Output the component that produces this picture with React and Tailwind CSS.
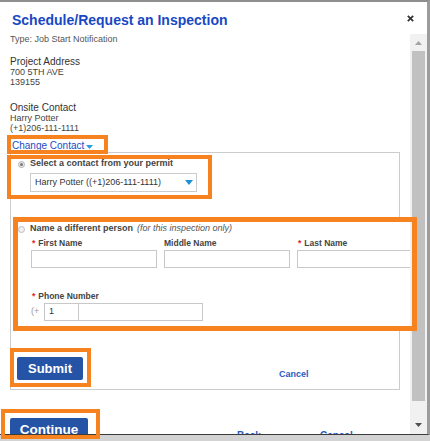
export default function App() {
  return (
    <div className="relative w-[430px] h-[441px] overflow-hidden bg-[#d3d3d3] font-['Liberation_Sans',Arial,sans-serif]">
      <div className="flex flex-col w-[430px] h-[435px] bg-white border-t-2 border-r-[3px] border-b border-t-[#8e8e8e] border-r-[#9c9c9c] border-b-[#3c3c3c]">
        {/* header */}
        <div className="flex h-[32px] shrink-0 items-start justify-between pl-[12px] pt-[10px]">
          <h1 className="text-[14px] leading-[16px] font-bold text-[#1848c4]">Schedule/Request an Inspection</h1>
          <svg className="mt-[3px] mr-[13px]" width="7" height="7" viewBox="0 0 7 7">
            <path d="M0.8 0.8 L6.2 6.2 M6.2 0.8 L0.8 6.2" stroke="#333" strokeWidth="1.7" />
          </svg>
        </div>
        {/* body */}
        <div className="flex h-[400px] shrink-0">
          <div className="w-[410px] shrink-0 overflow-hidden pl-[10px]">
            <p className="text-[9px] leading-[10px] text-[#555]">Type: Job Start Notification</p>
            <div className="mt-[13px] text-[9px] leading-[10px] text-[#444]">
              <p className="text-[10px] text-[#333]">Project Address</p>
              <p>700 5TH AVE</p>
              <p>139155</p>
            </div>
            <div className="mt-[16px] text-[9px] leading-[10px] text-[#444]">
              <p className="text-[10px] text-[#333]">Onsite Contact</p>
              <p>Harry Potter</p>
              <p>(+1)206-111-1111</p>
            </div>
            <div className="ml-[2px] mt-[8px] flex items-center text-[10px] leading-[10px] text-[#1a4cc4]">
              <span className="underline">Change Contact</span>
              <svg className="ml-[2px] mt-[2px]" width="7" height="4" viewBox="0 0 7 4">
                <path d="M0 0 L7 0 L3.5 4 Z" fill="#2b9be0" />
              </svg>
            </div>

            {/* panel */}
            <div className="mt-[1px] w-[390px] border border-[#cccccc] pb-[9px]">
              <div className="mt-[5px] flex h-[12px] items-center">
                <span className="ml-[7px] flex h-[7px] w-[7px] items-center justify-center rounded-full border border-[#b3b3b3] bg-[#ececec]">
                  <span className="h-[3px] w-[3px] rounded-full bg-[#777]" />
                </span>
                <span className="ml-[5px] text-[9px] font-bold text-[#444]">Select a contact from your permit</span>
              </div>
              <div className="ml-[19px] mt-[3px] flex h-[19px] w-[167px] items-center justify-between border border-[#cccccc] pl-[4px] pr-[3px]">
                <span className="text-[9px] text-[#333]">Harry Potter ((+1)206-111-1111)</span>
                <svg width="8" height="5" viewBox="0 0 8 5">
                  <path d="M0 0 L8 0 L4 5 Z" fill="#1e90d8" />
                </svg>
              </div>

              {/* different person */}
              <div className="mt-[30px] w-[399px] bg-white pt-[1px] pb-[5px]">
                <div className="flex h-[12px] items-center">
                  <span className="ml-[7px] h-[7px] w-[7px] rounded-full border border-[#bdbdbd] bg-[#f0f0f0]" />
                  <span className="ml-[5px] text-[9px] font-bold text-[#444]">Name a different person</span>
                  <span className="ml-[4px] text-[9px] italic text-[#555]">(for this inspection only)</span>
                </div>
                <div className="ml-[20px] mt-[2px] flex h-[12px] items-center gap-[7px] text-[8.5px] font-bold text-[#444]">
                  <div className="flex w-[126px] shrink-0 items-center">
                    <span className="ml-[1px] text-[#e02222]">*</span>
                    <span className="ml-[3px]">First Name</span>
                  </div>
                  <div className="w-[126px] shrink-0">Middle Name</div>
                  <div className="flex w-[126px] shrink-0 items-center">
                    <span className="ml-[1px] text-[#e02222]">*</span>
                    <span className="ml-[3px]">Last Name</span>
                  </div>
                </div>
                <div className="ml-[20px] mt-[1px] flex gap-[7px]">
                  <div className="h-[18px] w-[126px] shrink-0 border border-[#c8c8c8]" />
                  <div className="h-[18px] w-[126px] shrink-0 border border-[#c8c8c8]" />
                  <div className="h-[18px] w-[126px] shrink-0 border border-[#c8c8c8]" />
                </div>
                <div className="ml-[20px] mt-[22px] flex h-[12px] items-center text-[8.5px] font-bold text-[#444]">
                  <span className="ml-[1px] text-[#e02222]">*</span>
                  <span className="ml-[3px]">Phone Number</span>
                </div>
                <div className="ml-[20px] mt-[1px] flex h-[18px] items-center">
                  <span className="w-[13px] text-[9px] text-[#9a9a9a]">(+</span>
                  <div className="flex h-[18px] w-[35px] items-center border border-[#c8c8c8] pl-[4px] text-[9px] text-[#333]">1</div>
                  <div className="h-[18px] w-[124px] border border-l-0 border-[#c8c8c8]" />
                </div>
              </div>

              <div className="mt-[31px] flex items-end">
                <button className="ml-[6px] h-[23px] w-[66px] rounded-[2px] bg-[#2553a6] text-[13px] font-bold text-white">Submit</button>
                <span className="ml-[196px] text-[9px] font-bold leading-[12px] text-[#2a5bc2]">Cancel</span>
              </div>
            </div>

            <div className="mt-[28px] flex items-end">
              <button className="h-[23px] w-[78px] rounded-[2px] bg-[#2553a6] pt-[2px] text-[13.5px] font-bold text-white">Continue</button>
              <span className="ml-[149px] -mb-[1px] text-[10px] font-bold leading-[12px] text-[#2a5bc2]">Back</span>
              <span className="ml-[59px] -mb-[1px] text-[10px] font-bold leading-[12px] text-[#2a5bc2]">Cancel</span>
            </div>
          </div>

          {/* scrollbar */}
          <div className="flex w-[17px] shrink-0 flex-col items-center bg-[#f1f1f1]">
            <div className="flex h-[17px] w-full items-center justify-center">
              <svg width="7" height="4" viewBox="0 0 7 4">
                <path d="M0 4 L3.5 0 L7 4 Z" fill="#a3a3a3" />
              </svg>
            </div>
            <div className="h-[350px] w-[13px] bg-[#c1c1c1]" />
            <div className="flex-1" />
            <div className="flex h-[17px] w-full items-center justify-center pb-[1px]">
              <svg width="7" height="4" viewBox="0 0 7 4">
                <path d="M0 0 L7 0 L3.5 4 Z" fill="#505050" />
              </svg>
            </div>
          </div>
        </div>
      </div>

      {/* annotation boxes */}
      <div className="absolute left-[7px] top-[135px] h-[19px] w-[101px] border-[4px] border-[#f68320]" />
      <div className="absolute left-[7px] top-[155px] h-[44px] w-[205px] border-[4px] border-[#f68320]" />
      <div className="absolute left-[13px] top-[217px] h-[114px] w-[404px] border-[5px] border-[#f68320]" />
      <div className="absolute left-[10px] top-[348px] h-[39px] w-[81px] border-[4px] border-[#f68320]" />
      <div className="absolute left-[1px] top-[409px] h-[30px] w-[99px] border-[4px] border-[#f68320]" />
    </div>
  );
}
